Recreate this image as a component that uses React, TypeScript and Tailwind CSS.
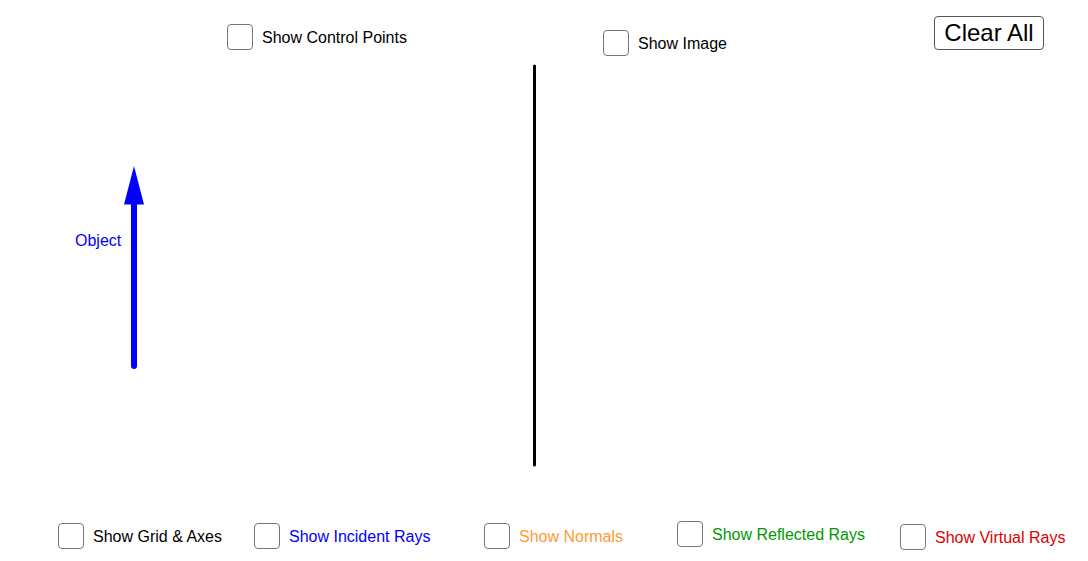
type ToggleProps = {
    label: string,
    className: string,
    textClassName: string
}

/**
 * GeoGebra 風のチェックボックス (キャンバス上に配置)
 */
function Toggle({ label, className, textClassName }: ToggleProps) {
    return (
        <label className={`absolute flex items-center gap-[9px] ${className}`}>
            <span className="block w-[26px] h-[26px] rounded-[4px] border border-[#767676] bg-white" />
            <span className={`pt-[2px] text-[16px] leading-none ${textClassName}`}>{label}</span>
        </label>
    )
}

export default function App() {
    return (
        <div className="relative w-[1088px] h-[561px] bg-white overflow-hidden font-['Liberation_Sans',Arial,sans-serif]">
            {/* canvas drawing */}
            <svg className="absolute left-0 top-0" width="1088" height="561">
                <line x1="534.5" y1="66" x2="534.5" y2="465" stroke="#000" strokeWidth="3" strokeLinecap="round" />
                <line x1="134" y1="366" x2="134" y2="200" stroke="#0000ff" strokeWidth="6" strokeLinecap="round" />
                <polygon points="124,204.5 144,204.5 134,166" fill="#0000ff" />
            </svg>
            <span className="absolute left-[75px] top-[233px] text-[16px] leading-none text-[#0000ff]">Object</span>

            <Toggle label="Show Control Points" className="left-[227px] top-[24px]" textClassName="text-black" />
            <Toggle label="Show Image" className="left-[603px] top-[30px]" textClassName="text-black" />

            <button className="absolute left-[934px] top-[16px] w-[110px] h-[34px] rounded-[4px] border border-[#555] bg-white text-[24px] leading-none text-black">
                Clear All
            </button>

            <Toggle label="Show Grid & Axes" className="left-[58px] top-[523px]" textClassName="text-black" />
            <Toggle label="Show Incident Rays" className="left-[254px] top-[523px]" textClassName="text-[#0000ff]" />
            <Toggle label="Show Normals" className="left-[484px] top-[523px]" textClassName="text-[#ff9933]" />
            <Toggle label="Show Reflected Rays" className="left-[677px] top-[521px]" textClassName="text-[#009900]" />
            <Toggle label="Show Virtual Rays" className="left-[900px] top-[524px]" textClassName="text-[#dc0000]" />
        </div>
    )
}
